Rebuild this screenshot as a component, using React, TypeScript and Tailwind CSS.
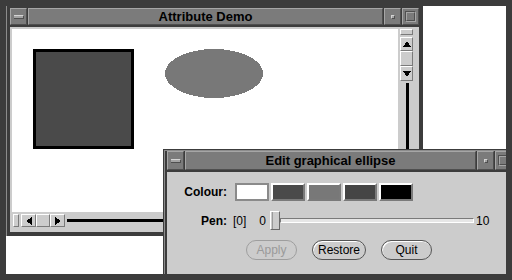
const raised =
  "border border-t-white border-l-white border-b-[#7a7a7a] border-r-[#7a7a7a] bg-[#cccccc]";
const bar =
  "border border-t-[#a6a6a6] border-l-[#a6a6a6] border-b-[#4f4f4f] border-r-[#4f4f4f] bg-[#7b7b7b]";

function TitleBar({ title }: { title: string }) {
  return (
    <div className="flex gap-px h-full">
      <div className={`${bar} w-[17px] flex items-center justify-center`}>
        <div className="w-[10px] h-[4px] bg-[#a3a3a3] border-t border-t-[#d4d4d4] border-b border-b-[#4f4f4f] border-r border-r-[#4f4f4f]" />
      </div>
      <div className={`${bar} flex-1 flex items-center justify-center text-[13px] font-bold text-black leading-none`}>
        {title}
      </div>
      <div className={`${bar} w-[17px] flex items-center justify-center`}>
        <div className="w-[4px] h-[4px] bg-[#a3a3a3] border-t border-l border-t-[#d4d4d4] border-l-[#d4d4d4] border-b border-r border-b-[#4f4f4f] border-r-[#4f4f4f]" />
      </div>
      <div className={`${bar} w-[17px] flex items-center justify-center`}>
        <div className="w-[11px] h-[11px] border border-t-[#4f4f4f] border-l-[#4f4f4f] border-b-[#a6a6a6] border-r-[#a6a6a6]">
          <div className="w-full h-full border border-t-[#a6a6a6] border-l-[#a6a6a6] border-b-[#4f4f4f] border-r-[#4f4f4f]" />
        </div>
      </div>
    </div>
  );
}

function Arrow({ dir }: { dir: "up" | "down" | "left" | "right" }) {
  const pts = {
    up: "0.5,6 4,1.5 7.5,6",
    down: "0.5,2 4,6.5 7.5,2",
    left: "6,0.5 1.5,4 6,7.5",
    right: "2,0.5 6.5,4 2,7.5",
  }[dir];
  return (
    <svg width="8" height="8" viewBox="0 0 8 8" shapeRendering="crispEdges">
      <polygon points={pts} fill="#000" />
      {dir === "up" && <rect x="0" y="6" width="8" height="1" fill="#000" />}
      {dir === "down" && <rect x="0" y="1" width="8" height="1" fill="#000" />}
      {dir === "left" && <rect x="6" y="0" width="1" height="8" fill="#000" />}
      {dir === "right" && <rect x="1" y="0" width="1" height="8" fill="#000" />}
    </svg>
  );
}

const swatches = [
  { c: "bg-white", b: "border-t-[#8a8a8a] border-l-[#8a8a8a] border-b-[#8a8a8a] border-r-[#8a8a8a]" },
  { c: "bg-[#4a4a4a]", b: "border-t-white border-l-white border-b-[#7a7a7a] border-r-[#7a7a7a]" },
  { c: "bg-[#787878]", b: "border-t-white border-l-white border-b-[#7a7a7a] border-r-[#7a7a7a]" },
  { c: "bg-[#454545]", b: "border-t-white border-l-white border-b-[#7a7a7a] border-r-[#7a7a7a]" },
  { c: "bg-black", b: "border-t-white border-l-white border-b-[#7a7a7a] border-r-[#7a7a7a]" },
];

export default function App() {
  return (
    <div className="w-[512px] h-[280px] bg-[#3c3c3c] p-[6px] font-['Liberation_Sans',Arial,sans-serif] text-black">
      <div className="relative w-full h-full bg-white overflow-hidden">
        {/* Main window */}
        <div className="absolute left-0 top-0 w-[417px] h-[230px] bg-[#3c3c3c] border-l border-l-[#8c8c8c] pl-[3px] pt-[2px] pr-[4px] pb-[4px] flex flex-col gap-[2px]">
          <div className="h-[17px]">
            <TitleBar title="Attribute Demo" />
          </div>
          <div className="flex-1 bg-[#cccccc] pt-[2px] pl-[2px] flex flex-col">
            <div className="flex gap-px h-[183px]">
              <div className="w-[386px] h-full bg-white">
                <svg width="386" height="183" shapeRendering="crispEdges">
                  <rect x="22.5" y="21.5" width="98" height="97" fill="#4a4a4a" stroke="#000" strokeWidth="3" />
                  <ellipse cx="202" cy="44.5" rx="49" ry="24.5" fill="#787878" />
                </svg>
              </div>
              <div className="w-[20px] h-full pl-px flex flex-col">
                <div className={`${raised} w-[13px] h-[6px]`} />
                <div className="mt-[2px] w-[13px] flex flex-col">
                  <div className={`${raised} h-[14px] flex items-center justify-center`}>
                    <Arrow dir="up" />
                  </div>
                  <div className={`${raised} h-[15px]`} />
                  <div className={`${raised} h-[15px] flex items-center justify-center`}>
                    <Arrow dir="down" />
                  </div>
                </div>
                <div className="mt-[2px] ml-[6px] w-[3px] flex-1 bg-black" />
              </div>
            </div>
            <div className="mt-px h-[15px] w-[386px] flex items-center">
              <div className={`${raised} ml-px w-[6px] h-[13px]`} />
              <div className="ml-[2px] flex h-[13px]">
                <div className={`${raised} w-[15px] flex items-center justify-center`}>
                  <Arrow dir="left" />
                </div>
                <div className={`${raised} w-[14px]`} />
                <div className={`${raised} w-[15px] flex items-center justify-center`}>
                  <Arrow dir="right" />
                </div>
              </div>
              <div className="ml-[2px] flex-1 h-[3px] bg-black" />
            </div>
          </div>
        </div>

        {/* Dialog window */}
        <div className="absolute left-[157px] top-[143px] w-[354px] h-[134px] bg-[#3c3c3c] p-px">
          <div className="w-full h-full border-l border-t border-l-[#8c8c8c] border-t-[#8c8c8c] pl-[2px] pr-[4px] pb-[6px] flex flex-col gap-[2px]">
            <div className="h-[19px]">
              <TitleBar title="Edit graphical ellipse" />
            </div>
            <div className="flex-1 bg-[#cccccc] pt-[11px] text-[12px]">
              <div className="grid grid-cols-[60px_auto] gap-x-[8px] gap-y-[10px] items-center">
                <div className="text-right font-bold">Colour:</div>
                <div className="flex gap-[2px] h-[18px]">
                  {swatches.map((s, i) => (
                    <div key={i} className={`w-[34px] h-full border-2 ${s.b} ${s.c}`} />
                  ))}
                </div>

                <div className="text-right font-bold">Pen:</div>
                <div className="flex items-center h-[19px] -ml-[2px]">
                  <span>[0]</span>
                  <span className="ml-[13px]">0</span>
                  <div className="ml-[4px] flex items-center">
                    <div className="w-[10px] h-[19px] border border-t-white border-l-white border-b-[#6a6a6a] border-r-[#6a6a6a] bg-[#cccccc] flex">
                      <div className="w-px h-full ml-[1px] bg-[#9a9a9a]" />
                    </div>
                    <div className="w-[194px] h-[5px] border border-t-[#7a7a7a] border-l-[#7a7a7a] border-b-white border-r-white bg-[#e6e6e6]" />
                  </div>
                  <span className="ml-[2px]">10</span>
                </div>

                <div />
                <div className="flex gap-[15px] ml-[11px] h-[20px]">
                  <div className="w-[51px] rounded-full border border-[#9e9e9e] flex items-center justify-center text-[#9a9a9a]">
                    Apply
                  </div>
                  <div className="w-[54px] rounded-full border border-[#555555] shadow-[inset_1px_1px_0_#ffffff] flex items-center justify-center">
                    Restore
                  </div>
                  <div className="w-[51px] rounded-full border border-[#555555] shadow-[inset_1px_1px_0_#ffffff] flex items-center justify-center">
                    Quit
                  </div>
                </div>
              </div>
            </div>
          </div>
        </div>
      </div>
    </div>
  );
}
